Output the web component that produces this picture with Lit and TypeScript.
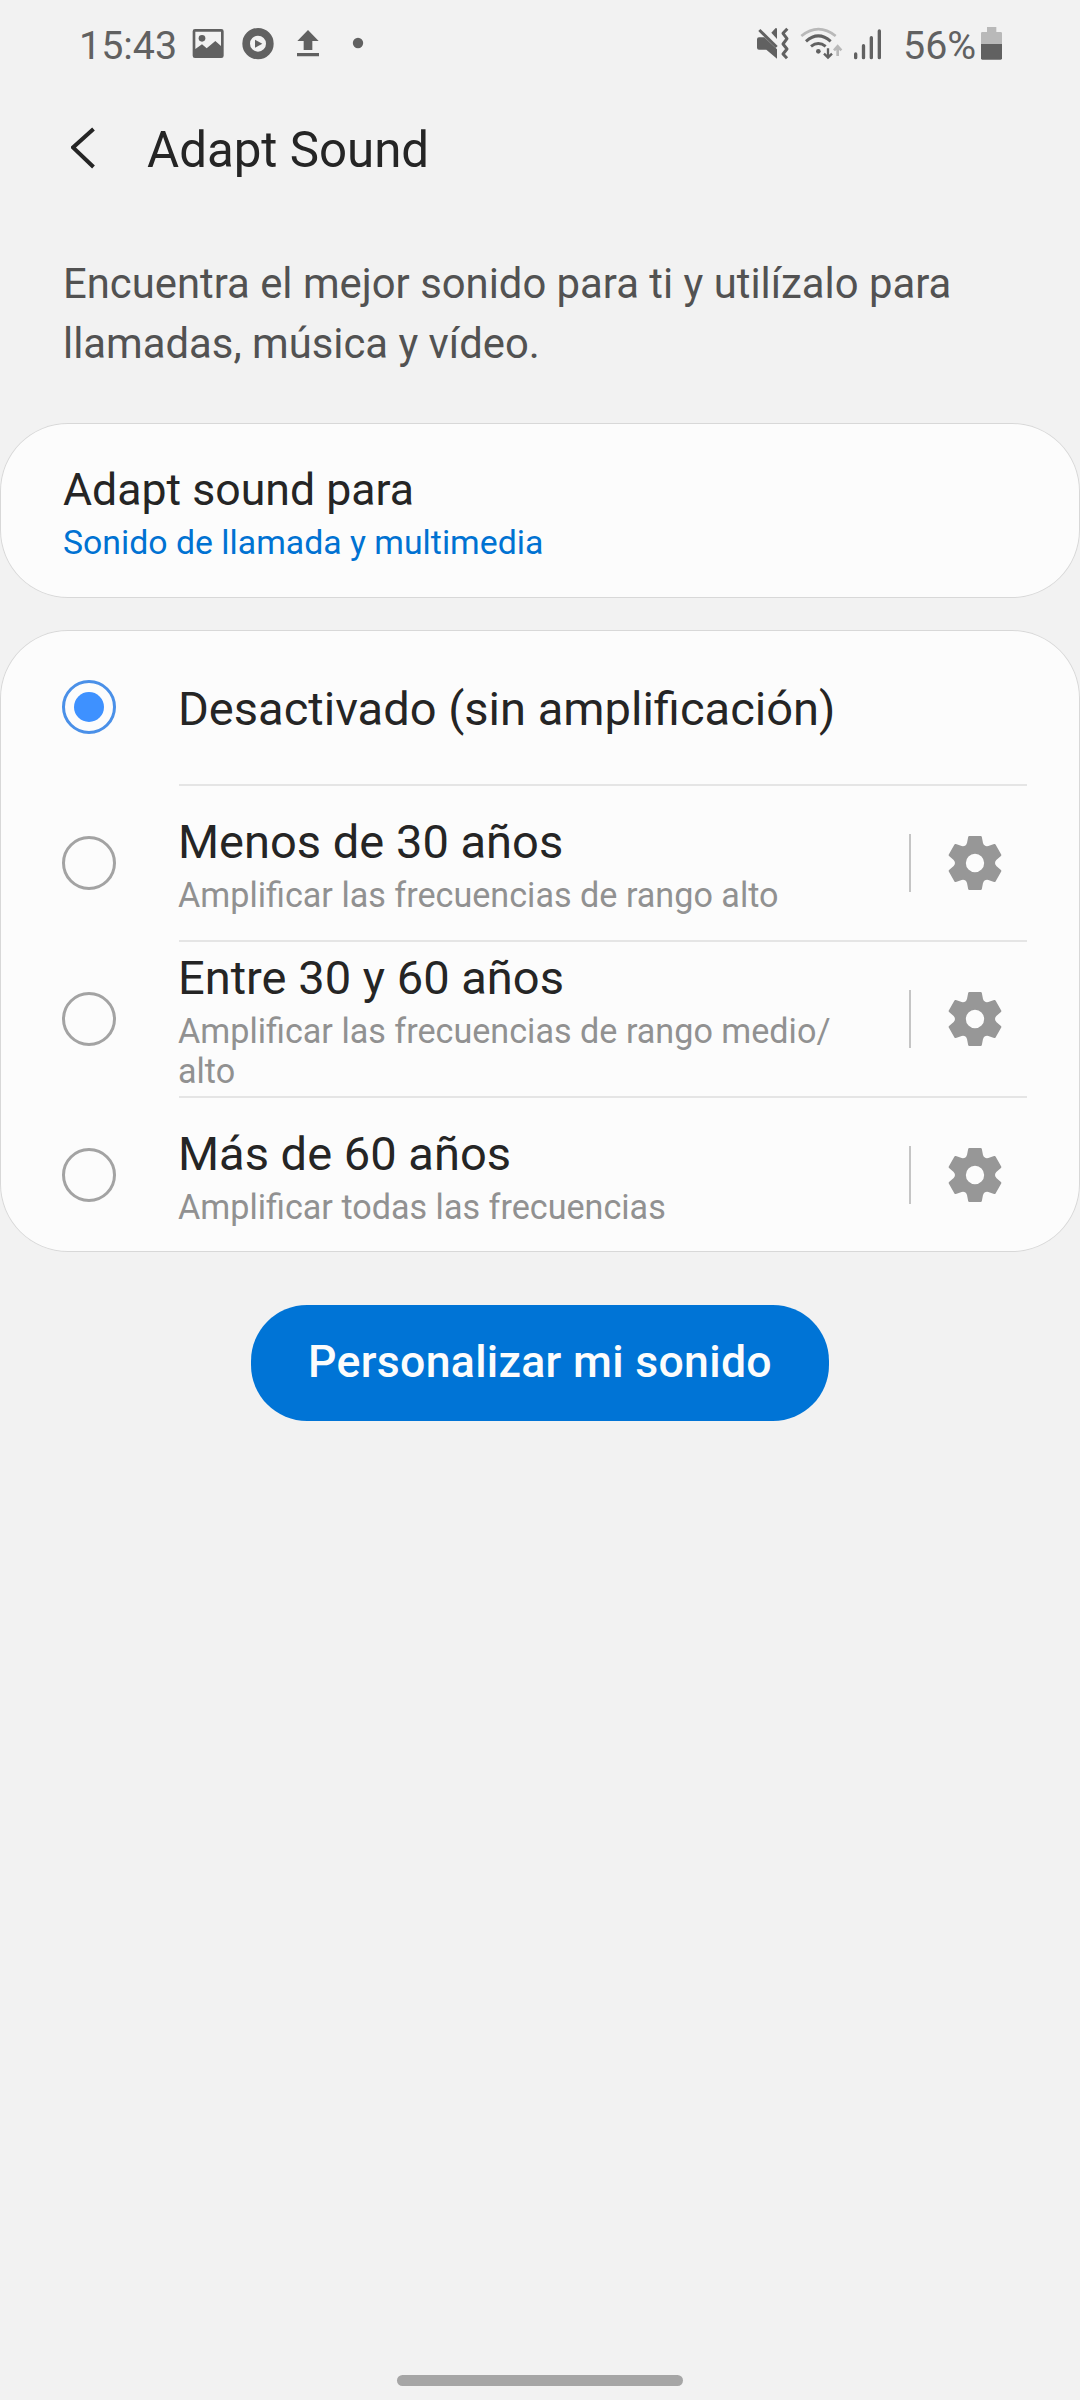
import { LitElement, html, css, svg, nothing } from "lit";
import { customElement, property, state } from "lit/decorators.js";

interface SoundOption {
  id: string;
  title: string;
  detail?: string;
}

const OPTIONS: SoundOption[] = [
  { id: "off", title: "Desactivado (sin amplificación)" },
  { id: "under30", title: "Menos de 30 años", detail: "Amplificar las frecuencias de rango alto" },
  { id: "30to60", title: "Entre 30 y 60 años", detail: "Amplificar las frecuencias de rango medio/\u200balto" },
  { id: "over60", title: "Más de 60 años", detail: "Amplificar todas las frecuencias" },
];

// One gear tooth is turned six times around the centre.
function gearOutline(): string {
  let d = "";
  for (let k = 0; k < 6; k++) {
    const a = (k * Math.PI) / 3;
    const p = (x: number, y: number) =>
      `${(x * Math.cos(a) - y * Math.sin(a)).toFixed(2)} ${(x * Math.sin(a) + y * Math.cos(a)).toFixed(2)}`;
    d += `${k === 0 ? "M" : "L"}${p(-24, -60)}L${p(-20.5, -78)}Q${p(-20, -81)} ${p(-17, -81)}`;
    d += `L${p(17, -81)}Q${p(20, -81)} ${p(20.5, -78)}L${p(24, -60)}Q${p(28, -48.5)} ${p(40, -51)}`;
  }
  return d + "Z";
}

const GEAR = gearOutline() + "M-27.5 0a27.5 27.5 0 1 0 55 0a27.5 27.5 0 1 0 -55 0Z";

@customElement("status-bar")
export class StatusBar extends LitElement {
  static styles = css`
    :host {
      display: flex;
      justify-content: space-between;
      align-items: flex-start;
      height: 88px;
      box-sizing: border-box;
      padding: 0 78px 0 79px;
      color: #616161;
    }
    .group {
      display: flex;
      align-items: flex-start;
    }
    .label {
      margin-top: 23px;
      font-size: 39.4px;
      line-height: 46px;
      white-space: nowrap;
    }
    .time {
      width: 113px;
    }
    .level {
      width: 78px;
      margin-left: 21px;
    }
    svg {
      display: block;
      margin-top: 27px;
      height: 33px;
      fill: currentColor;
    }
    .play {
      margin-left: 18px;
    }
    .upload {
      margin-left: 23px;
    }
    .more {
      margin-left: 33px;
    }
    .wifi {
      margin-left: 11px;
    }
    .signal {
      margin-left: 10px;
    }
    .line {
      fill: none;
      stroke: currentColor;
    }
    .faint {
      color: #b9b9b9;
    }
  `;

  render() {
    return html`
      <div class="group">
        <span class="label time">15:43</span>
        <svg width="32" viewBox="396 51 96 99">
          <path fill-rule="evenodd" d="M405 57H484Q491 57 491 64V137Q491 144 484 144H405Q398 144 398 137V64Q398 57 405 57ZM406 65V117L426 103L440 115L466 93L483 108V65Z" />
          <circle cx="426" cy="85" r="10" />
        </svg>
        <svg class="play" width="32" viewBox="546 51 96 99">
          <circle class="line" cx="594" cy="101" r="35.5" stroke-width="23" />
          <path d="M585 89L607 101L585 113Z" />
        </svg>
        <svg class="upload" width="22" viewBox="711 51 66 99">
          <path d="M744 60L776 93H757V120H731V93H712ZM711 129H777V139H711Z" />
        </svg>
        <svg class="more" width="12" viewBox="876 51 36 99"><circle cx="894" cy="99" r="15.5" /></svg>
      </div>
      <div class="group">
        <svg width="33" viewBox="48 51 99 99">
          <path d="M57 82H73L111 118V146L79 119H57Q51 119 51 113V88Q51 82 57 82Z" />
          <path d="M94 68L107 54Q111 54 111 57V87Z" />
          <path class="line" stroke-width="9" d="M58 60L110 111" />
          <path class="line" stroke-width="9" stroke-linejoin="round" d="M142 56L129 70L141 86L129 102L141 117L129 132L141 145" />
        </svg>
        <svg class="wifi" width="43" viewBox="180 51 129 99">
          <path class="line faint" stroke-width="8" d="M184 78Q235 37 287 78" />
          <path class="line" stroke-width="9" d="M198 94Q235 61 272 94" />
          <path class="line" stroke-width="9" d="M213 109Q235 92 257 109" />
          <circle cx="235" cy="124" r="7" />
          <path class="line" stroke-width="7" d="M264 115V142M252 131L264 143L276 131" />
          <path class="line faint" stroke-width="8" d="M293 138V110M282 121L293 109L304 121" />
        </svg>
        <svg class="signal" width="29" viewBox="339 51 87 99">
          <path class="line" stroke-width="10" stroke-linecap="round" d="M347 132V143M370.5 107V143M394 83V143M418 63V143" />
        </svg>
        <span class="label level">56%</span>
        <svg width="21" viewBox="723 51 63 99">
          <path class="faint" fill="currentColor" d="M741 51H769V66H782Q786 66 786 70V102H723V70Q723 66 727 66H741Z" />
          <path d="M723 102H786V145Q786 149 782 149H727Q723 149 723 145Z" />
        </svg>
      </div>
    `;
  }
}

@customElement("sound-option")
export class SoundOptionRow extends LitElement {
  @property() heading = "";
  @property() detail = "";
  @property({ type: Boolean }) checked = false;

  static styles = css`
    :host {
      display: flex;
      align-items: center;
      height: 154px;
      box-sizing: border-box;
      padding: 0 78px 0 62px;
    }
    .radio {
      flex: none;
      width: 54px;
      height: 54px;
      box-sizing: border-box;
      border: 3px solid #a3a3a3;
      border-radius: 50%;
      display: grid;
      place-items: center;
    }
    .radio.on {
      border-color: #4a90e8;
    }
    .radio.on::after {
      content: "";
      width: 30px;
      height: 30px;
      border-radius: 50%;
      background: #3e91ff;
    }
    .text {
      flex: 1;
      margin-left: 62px;
      padding-top: 3px;
    }
    .heading {
      font-size: 47.05px;
      line-height: 55px;
      color: #252525;
      white-space: nowrap;
    }
    .detail {
      margin-top: 6px;
      font-size: 34.15px;
      line-height: 40px;
      color: #919191;
    }
    .tools {
      flex: none;
      display: flex;
      align-items: center;
      margin-left: 40px;
    }
    .rule {
      width: 2px;
      height: 58px;
      background: #c5c5c5;
    }
    .gear {
      display: block;
      width: 54px;
      height: 54px;
      margin-left: 37px;
      fill: #979797;
    }
  `;

  render() {
    return html`
      <span class="radio ${this.checked ? "on" : ""}"></span>
      <div class="text">
        <div class="heading">${this.heading}</div>
        ${this.detail ? html`<div class="detail">${this.detail}</div>` : nothing}
      </div>
      ${this.detail
        ? html`<div class="tools">
            <span class="rule"></span>
            <svg class="gear" viewBox="-81 -81 162 162">${svg`<path fill-rule="evenodd" d=${GEAR} />`}</svg>
          </div>`
        : nothing}
    `;
  }
}

@customElement("app-root")
export class AppRoot extends LitElement {
  @state() private selected = "off";

  static styles = css`
    :host {
      display: flex;
      flex-direction: column;
      width: 1080px;
      height: 2400px;
      background: #f2f2f2;
      font-family: Roboto, "Liberation Sans", sans-serif;
      overflow: hidden;
    }
    .bar {
      display: flex;
      align-items: center;
      height: 120px;
      padding-left: 71px;
    }
    .back {
      display: block;
      width: 25px;
      height: 42px;
      fill: none;
      stroke: #252525;
      stroke-width: 4;
    }
    .title {
      margin: 4px 0 0 51px;
      font-size: 49.25px;
      line-height: 60px;
      font-weight: 400;
      color: #252525;
    }
    .intro {
      margin: 46px 63px 0;
      font-size: 41.82px;
      line-height: 60px;
      color: #525252;
    }
    .card {
      border-radius: 68px;
      background: #fcfcfc;
      box-shadow: inset 0 0 0 1px #d8d8d8;
    }
    .target {
      height: 175px;
      box-sizing: border-box;
      margin-top: 49px;
      padding: 41px 63px 0;
    }
    .target-title {
      font-size: 44.625px;
      line-height: 52px;
      color: #252525;
    }
    .target-value {
      margin-top: 7px;
      font-size: 33.8px;
      line-height: 40px;
      color: #0072d2;
    }
    .options {
      margin-top: 32px;
    }
    .divider {
      height: 2px;
      margin: 0 53px 0 179px;
      background: #e5e5e5;
    }
    .action {
      align-self: center;
      width: 578px;
      height: 116px;
      margin-top: 53px;
      padding: 0 0 2px;
      border: 0;
      border-radius: 56px;
      background: #0074d6;
      color: #fcfcfc;
      font: 500 44.625px/52px Roboto, "Liberation Sans", sans-serif;
      letter-spacing: 0.3px;
    }
    .handle {
      align-self: center;
      width: 286px;
      height: 11px;
      margin: auto 0 14px;
      border-radius: 6px;
      background: #a6a6a6;
    }
  `;

  render() {
    return html`
      <status-bar></status-bar>
      <header class="bar">
        <svg class="back" viewBox="71 127 25 42"><path d="M93.5 129L73 147.5L93.5 167" /></svg>
        <h1 class="title">Adapt Sound</h1>
      </header>
      <div class="intro">Encuentra el mejor sonido para ti y utilízalo para llamadas, música y vídeo.</div>
      <section class="card target">
        <div class="target-title">Adapt sound para</div>
        <div class="target-value">Sonido de llamada y multimedia</div>
      </section>
      <section class="card options">
        ${OPTIONS.map(
          (o, i) => html`
            ${i > 0 ? html`<div class="divider"></div>` : nothing}
            <sound-option
              .heading=${o.title}
              .detail=${o.detail ?? ""}
              .checked=${this.selected === o.id}
              @click=${() => (this.selected = o.id)}
            ></sound-option>
          `
        )}
      </section>
      <button class="action">Personalizar mi sonido</button>
      <div class="handle"></div>
    `;
  }
}
